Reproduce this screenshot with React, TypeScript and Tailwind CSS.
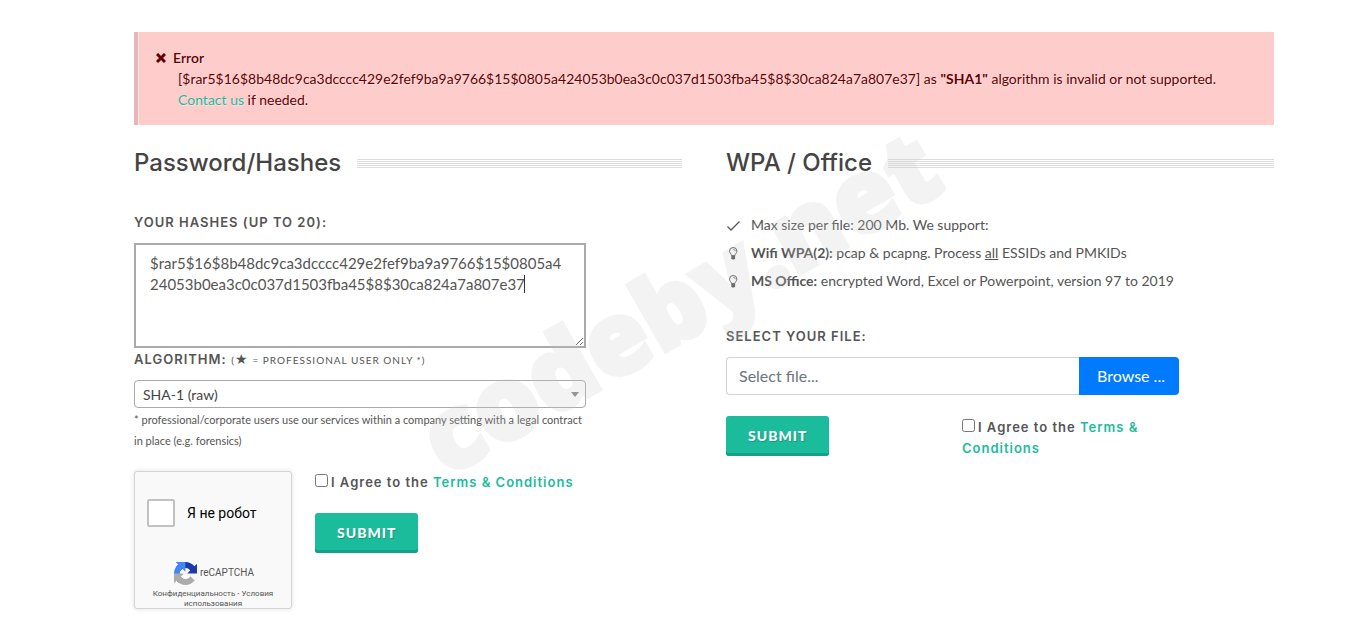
import type { FormEvent, ReactNode } from "react";
import { useState } from "react";

const HASH = "$rar5$16$8b48dc9ca3dcccc429e2fef9ba9a9766$15$0805a424053b0ea3c0c037d1503fba45$8$30ca824a7a807e37";

function SectionTitle({ children }: { children: ReactNode }) {
  return (
    <div className="flex items-center gap-4">
      <h3 className="font-[Inter,sans-serif] text-2xl leading-9 font-medium text-[#444]">{children}</h3>
      <div className="h-[9px] flex-1 bg-[repeating-linear-gradient(to_bottom,#ddd_0_1px,#fff_1px_2px)]" />
    </div>
  );
}

function SubmitButton() {
  return (
    <button
      type="submit"
      className="h-10 rounded-[3px] bg-[#1abc9c] px-[22px] text-sm font-black tracking-[1px] text-white uppercase shadow-[inset_0_-3px_0_#16a085] [text-shadow:1px_1px_1px_rgba(0,0,0,0.2)]"
    >
      Submit
    </button>
  );
}

function Agree({ id }: { id: string }) {
  return (
    <label htmlFor={id} className="mt-px block font-[Inter,sans-serif] text-[13px] leading-[21px] font-semibold tracking-[1px] text-[#555]">
      <input id={id} name={id} type="checkbox" className="mr-[3px] size-[13px]" />
      I Agree to the{" "}
      <a href="#terms" className="text-[#1abc9c]">
        Terms &amp; Conditions
      </a>
    </label>
  );
}

function CheckIcon() {
  return (
    <svg viewBox="0 0 14 14" className="size-[14px]" fill="none" stroke="#555" strokeWidth="1.3">
      <path d="M1.500 8.500 5 12 13.500 3.500" />
    </svg>
  );
}

function BulbIcon() {
  return (
    <svg viewBox="0 0 14 14" className="size-[14px]" fill="none" stroke="#555" strokeWidth="1">
      <path d="M5.500 9.600C5.500 8 3.500 7 3.500 5.200a3.700 3.700 0 0 1 7.400 0C10.900 7 8.900 8 8.900 9.600Z" />
      <path d="M7.200 3.300c1.200 0 1.900.8 1.900 1.900" strokeWidth="0.8" />
      <path d="M5.300 10h3.800v2.200L8.200 13.600H6.200L5.300 12.200Z" fill="#555" stroke="none" />
    </svg>
  );
}

function CaptchaLogo() {
  return (
    <svg viewBox="0 0 64 64" className="size-[23px]">
      <path
        fill="#1c3aa9"
        d="M64 31.955a33.500 33.500 0 0 0-.037-1.374V4.687l-7.159 7.159C50.945 4.674 42.033.093 32.050.093c-10.389 0-19.622 4.960-25.458 12.640l11.734 11.858a15.550 15.550 0 0 1 4.754-5.334c2.050-1.600 4.952-2.906 8.968-2.906.485 0 .860.057 1.135.163 4.976.393 9.288 3.140 11.828 7.124l-8.307 8.307c10.522-.040 22.400-.066 27.295.005"
      />
      <path
        fill="#4285f4"
        d="M31.862.094a33.500 33.500 0 0 0-1.374.037H4.594l7.159 7.159C4.581 13.149 0 22.061 0 32.045c0 10.389 4.960 19.622 12.640 25.458l11.858-11.734a15.550 15.550 0 0 1-5.334-4.754c-1.600-2.050-2.906-4.952-2.906-8.968 0-.485.057-.860.163-1.135.393-4.976 3.140-9.288 7.124-11.828l8.307 8.307c-.040-10.522-.066-22.400.005-27.295"
      />
      <path
        fill="#ababab"
        d="M.001 32.045c.002.460.013.918.037 1.374v25.894l7.159-7.159c5.859 7.172 14.771 11.753 24.755 11.753 10.389 0 19.622-4.960 25.458-12.640L45.676 39.409a15.550 15.550 0 0 1-4.754 5.334c-2.050 1.600-4.952 2.906-8.968 2.906-.485 0-.860-.057-1.135-.163-4.976-.393-9.288-3.140-11.828-7.124l8.307-8.307c-10.522.040-22.400.066-27.295-.005"
      />
    </svg>
  );
}

function Captcha() {
  return (
    <div className="flex h-[138px] w-[158px] flex-col items-center overflow-hidden rounded-[3px] border border-[#d3d3d3] bg-[#f9f9f9] font-[Roboto,sans-serif] shadow-[0_0_4px_1px_rgba(0,0,0,0.08)]">
      <label className="mt-[27px] flex items-center gap-3 self-start pl-3 text-sm leading-7 text-black">
        <input type="checkbox" name="robot" className="size-7 appearance-none rounded-[2px] border-2 border-[#c1c1c1] bg-white" />
        Я не робот
      </label>
      <div className="mt-[34px] flex items-center gap-[3px] pl-[2px] text-[10px] leading-6 text-[#555]">
        <CaptchaLogo />
        reCAPTCHA
      </div>
      <p className="mt-[4px] px-2 text-center text-[8px] leading-[10px] text-[#555]">
        <a href="#privacy">Конфиденциальность</a> - <a href="#conditions">Условия использования</a>
      </p>
    </div>
  );
}

function ErrorMessage() {
  return (
    <div className="border-l-4 border-[#e5b7b7] bg-[#fcc] text-[#600] [text-shadow:1px_1px_1px_rgba(255,255,255,0.5)]">
      <div className="border-l border-[#ffe5e5] py-[15px] pr-[15px] pl-[17px]">
        <p className="flex items-center gap-[7px]">
          <svg viewBox="0 0 10 10" className="size-[10px]" stroke="#600" strokeWidth="3">
            <path d="M1 1l8 8M9 1l-8 8" />
          </svg>
          <span className="font-semibold">Error</span>
        </p>
        <p className="pl-[22px]">
          [{HASH}] as <strong>"SHA1"</strong> algorithm is invalid or not supported.
          <br />
          <a href="#contact" className="text-[#1abc9c]">
            Contact us
          </a>{" "}
          if needed.
        </p>
      </div>
    </div>
  );
}

function HashForm() {
  const [hashes, setHashes] = useState(HASH);

  function submitHashes(event: FormEvent<HTMLFormElement>) {
    event.preventDefault();
  }

  return (
    <form onSubmit={submitHashes}>
      <div className="max-w-[452px]">
        <label htmlFor="hashes" className="mb-[10px] block font-[Inter,sans-serif] text-[13px] leading-[21px] font-semibold tracking-[1px] uppercase">
          Your hashes (up to 20):
        </label>
        <div className="relative">
          <textarea
            id="hashes"
            value={hashes}
            onChange={(event) => setHashes(event.target.value)}
            spellCheck={false}
            className="block h-[105px] w-full resize border-2 border-[#aaa] bg-white py-2 pr-5 pl-[14px] text-[15px] leading-[21px] break-all outline-none"
          />
          {hashes === HASH ? <span className="pointer-events-none absolute top-8 left-[390px] h-[18px] w-px bg-[#333]" /> : null}
        </div>
        <label htmlFor="algorithm" className="mb-[9px] block h-[23px] leading-[21px] tracking-[1px] uppercase">
          <span className="font-[Inter,sans-serif] text-[13px] font-semibold">Algorithm:</span>{" "}
          <span className="text-[10px]">
            (<span className="text-sm leading-none">★</span> = professional user only *)
          </span>
        </label>
        <div className="relative">
          <select id="algorithm" className="block h-7 w-full appearance-none rounded border border-[#aaa] bg-white px-2 pt-px text-sm text-[#444]">
            <option>SHA-1 (raw)</option>
          </select>
          <svg viewBox="0 0 8 5" className="pointer-events-none absolute top-3 right-[7px] h-[5px] w-2" fill="#888">
            <path d="M0 0h8L4 5z" />
          </svg>
        </div>
        <p className="mt-px text-[11px]">
          * professional/corporate users use our services within a company setting with a legal contract in place (e.g. forensics)
        </p>
      </div>
      <div className="mt-5 flex gap-[23px]">
        <Captcha />
        <div className="flex flex-col items-start gap-5">
          <Agree id="agreeHashes" />
          <SubmitButton />
        </div>
      </div>
    </form>
  );
}

function FileForm() {
  function submitFile(event: FormEvent<HTMLFormElement>) {
    event.preventDefault();
  }

  return (
    <form onSubmit={submitFile} className="max-w-[453px]">
      <label htmlFor="file" className="mb-[10px] block font-[Inter,sans-serif] text-[13px] leading-[21px] font-semibold tracking-[1px] uppercase">
        Select your file:
      </label>
      <div className="flex h-[38px] text-base">
        <input
          id="file"
          type="text"
          readOnly
          placeholder="Select file..."
          className="min-w-0 flex-1 rounded-l border border-r-0 border-[#ced4da] px-3 placeholder:text-[#6c757d]"
        />
        <button type="button" className="w-[100px] rounded-r bg-[#007bff] pl-1 text-white">
          Browse ...
        </button>
      </div>
      <div className="mt-[21px] grid grid-cols-[236px_1fr]">
        <div>
          <SubmitButton />
        </div>
        <Agree id="agreeFile" />
      </div>
    </form>
  );
}

export default function App() {
  return (
    <main className="relative overflow-hidden pt-8 pr-[94px] pb-[22px] pl-[134px] font-[Lato,sans-serif] text-sm leading-[21px] text-[#555]">
      <ErrorMessage />
      <div className="mt-5 grid grid-cols-2 gap-11">
        <section>
          <SectionTitle>Password/Hashes</SectionTitle>
          <div className="mt-[31px]">
            <HashForm />
          </div>
        </section>
        <section>
          <SectionTitle>WPA / Office</SectionTitle>
          <ul className="mt-[30px] mb-[31px] leading-7">
            <li className="flex items-center gap-[11px]">
              <CheckIcon />
              <span>Max size per file: 200 Mb. We support:</span>
            </li>
            <li className="flex items-center gap-[11px]">
              <BulbIcon />
              <span>
                <strong>Wifi WPA(2):</strong> pcap &amp; pcapng. Process <u>all</u> ESSIDs and PMKIDs
              </span>
            </li>
            <li className="flex items-center gap-[11px]">
              <BulbIcon />
              <span>
                <strong>MS Office:</strong> encrypted Word, Excel or Powerpoint, version 97 to 2019
              </span>
            </li>
          </ul>
          <FileForm />
        </section>
      </div>
      <div className="pointer-events-none absolute top-[300px] left-[678px] -translate-x-1/2 -translate-y-1/2 -rotate-30 font-['Open_Sans',sans-serif] text-[101px] leading-none font-extrabold text-[#c8c8c8] opacity-20 [-webkit-text-stroke:4px_#c8c8c8]">
        codeby.net
      </div>
    </main>
  );
}
